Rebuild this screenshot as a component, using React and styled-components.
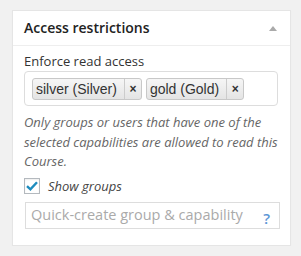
import React from "react";
import styled, { createGlobalStyle } from "styled-components";

const GlobalStyle = createGlobalStyle`
	html, body {
		margin: 0;
		padding: 0;
		background: #f1f1f1;
		font-family: "Open Sans", "Liberation Sans", sans-serif;
		color: #444;
	}
	* {
		box-sizing: border-box;
	}
`;

const tags = [
	{ id: "silver", label: "silver (Silver)" },
	{ id: "gold", label: "gold (Gold)" },
];

function App() {
	return (
		<>
			<GlobalStyle />
			<Card>
				<Header>
					<Title>Access restrictions</Title>
					<Toggle />
				</Header>
				<Body>
					<Label>Enforce read access</Label>
					<TagBox>
						{tags.map((tag) => (
							<Tag key={tag.id}>
								<TagText>{tag.label}</TagText>
								<TagRemove>×</TagRemove>
							</Tag>
						))}
					</TagBox>
					<Description>
						Only groups or users that have one of the selected capabilities are
						allowed to read this Course.
					</Description>
					<CheckRow>
						<CheckBox>
							<svg width="14" height="14" viewBox="0 0 14 14">
								<path
									d="M2 7.2 L5.4 10.4 L12 3.2"
									fill="none"
									stroke="#1e8cbe"
									strokeWidth="2.4"
								/>
							</svg>
						</CheckBox>
						<CheckLabel>Show groups</CheckLabel>
					</CheckRow>
					<QuickCreate>
						<Placeholder>Quick-create group &amp; capability</Placeholder>
						<Help>?</Help>
					</QuickCreate>
				</Body>
			</Card>
		</>
	);
}

export default App;

const Card = styled.div`
	width: 279px;
	margin: 10px 0 0 12px;
	background: #fff;
	border: 1px solid #e5e5e5;
	box-shadow: 0 1px 1px rgba(0, 0, 0, 0.04);
`;

const Header = styled.div`
	height: 35px;
	padding: 0 13px 0 11px;
	display: flex;
	align-items: center;
	justify-content: space-between;
	border-bottom: 1px solid #eee;
`;

const Title = styled.h2`
	margin: 0;
	font-size: 14px;
	font-weight: 600;
	color: #222;
	line-height: 1.4;
`;

const Toggle = styled.span`
	width: 0;
	height: 0;
	border-left: 4px solid transparent;
	border-right: 4px solid transparent;
	border-bottom: 5px solid #aaa;
	margin-top: 1px;
`;

const Body = styled.div`
	padding: 6px 11px 16px 11px;
`;

const Label = styled.div`
	font-size: 13px;
	line-height: 18px;
	color: #333;
	margin-bottom: 1px;
`;

const TagBox = styled.div`
	width: 254px;
	height: 35px;
	border: 1px solid #ddd;
	border-radius: 4px;
	padding: 6px 7px;
	display: flex;
	gap: 4px;
`;

const Tag = styled.div`
	height: 22px;
	display: flex;
	align-items: stretch;
	border: 1px solid #c8c8c8;
	border-radius: 3px;
	background: linear-gradient(#f6f6f6, #e4e4e4);
	font-family: "Liberation Sans", Arial, sans-serif;
	font-size: 14px;
	color: #333;
`;

const TagText = styled.span`
	display: flex;
	align-items: center;
	padding: 0 7px 0 3px;
	border-right: 1px solid #ccc;
`;

const TagRemove = styled.span`
	width: 16px;
	display: flex;
	align-items: center;
	justify-content: center;
	font-size: 12px;
	font-weight: bold;
	color: #333;
`;

const Description = styled.p`
	margin: 7px 0 0;
	font-size: 13px;
	line-height: 19.5px;
	font-style: italic;
	color: #666;
`;

const CheckRow = styled.div`
	margin-top: 6px;
	display: flex;
	align-items: center;
	gap: 8px;
	height: 16px;
`;

const CheckBox = styled.span`
	width: 16px;
	height: 16px;
	border: 1px solid #b4b9be;
	background: #fff;
	box-shadow: inset 0 1px 2px rgba(0, 0, 0, 0.07);
	display: flex;
	align-items: center;
	justify-content: center;
`;

const CheckLabel = styled.span`
	font-size: 13px;
	font-style: italic;
	color: #444;
`;

const QuickCreate = styled.div`
	margin-top: 8px;
	margin-left: 1px;
	width: 255px;
	height: 27px;
	border: 1px solid #ddd;
	display: flex;
	align-items: center;
	justify-content: space-between;
	padding: 0 9px 0 5px;
`;

const Placeholder = styled.span`
	font-size: 14.5px;
	color: #aaa;
	margin-top: -2px;
`;

const Help = styled.span`
	font-size: 15px;
	font-weight: 600;
	color: #5c95d6;
	margin-top: 5px;
`;
